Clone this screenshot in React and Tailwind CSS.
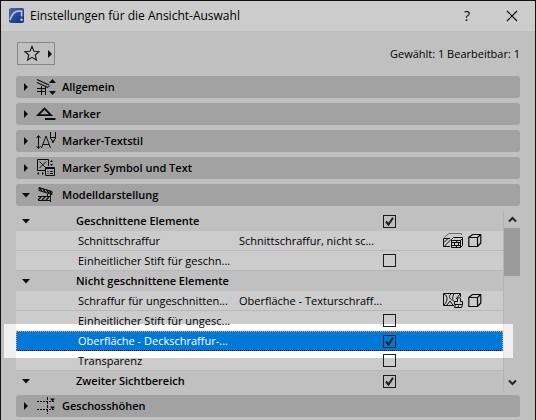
import React, { useState } from 'react';

const StarIcon = () => (
  <svg width="17" height="17" viewBox="0 0 17 17" fill="none" stroke="#222" strokeWidth="1.2">
    <path d="M8.5 1 L10.6 6.2 L16 6.6 L11.9 10.1 L13.2 15.5 L8.5 12.6 L3.8 15.5 L5.1 10.1 L1 6.6 L6.4 6.2 Z" />
  </svg>
);

const Arrow = ({ open }) => (
  <svg width="8" height="8" viewBox="0 0 8 8" fill="#111" className="shrink-0">
    {open ? <path d="M0 2 H8 L4 6.4 Z" /> : <path d="M2 0 L6 4 L2 8 Z" />}
  </svg>
);

const AppLogo = () => (
  <svg width="16" height="16" viewBox="0 0 16 16">
    <defs>
      <linearGradient id="logo" x1="0" y1="0" x2="1" y2="1">
        <stop offset="0" stopColor="#5b86dc" />
        <stop offset="0.5" stopColor="#2c5cc8" />
        <stop offset="1" stopColor="#123a9c" />
      </linearGradient>
    </defs>
    <rect x="0" y="0" width="15" height="15" rx="2" fill="url(#logo)" />
    <path d="M1 12 C3 6 6 3.2 9.5 3.2 H12.6 V8.5" fill="none" stroke="#e8effc" strokeWidth="1.8" />
    <circle cx="12.6" cy="11.8" r="1.3" fill="#fff" />
  </svg>
);

const icons = {
  general: (
    <>
      <path d="M1 1.5 L13 7 M1 4.5 L12 9.5" strokeWidth="1.3" />
      <path d="M1 10.5 H10 M1 13.5 H10 M5.5 8 V17 M9.5 9 V17 M12 9.5 L14 7.5" />
      <path d="M13 5 L16.5 1 L20 5 Z M13 13 H20 L16.5 17 Z" fill="#111" stroke="none" />
    </>
  ),
  marker: (
    <>
      <path d="M2 10.2 L8.5 3.5 L15 10.2 Z" strokeWidth="1.8" />
      <path d="M9 14 H19.5" strokeWidth="2" />
    </>
  ),
  textStyle: (
    <>
      <path d="M2.5 4 V16 M0.5 6 L2.5 3.5 L4.5 6 M0.5 14 L2.5 16.5 L4.5 14" />
      <path d="M5.5 16 L10 4 L14.5 16 M7 12.5 H13" />
      <path d="M14.5 0 V6 L17 10.5 L19.5 6 V0 M14.5 5.5 H19.5 M17 8 V11" />
    </>
  ),
  symbol: (
    <>
      <path d="M9 11.5 H1.5 V0.5 H12.5 V7 M3.5 2.5 L10 9 M10 2.5 L3.5 9" />
      <path d="M9.5 8.5 H18.5 V16.5 H9.5 Z M9.5 9.5 H18.5 M11.5 12.5 H12.5 M14 12.5 H17 M11.5 14.5 H12.5 M14 14.5 H17" />
      <path d="M14 3 L15.5 1 L17 3 Z M14 5 H17 L15.5 7 Z M3 13 V16 L1 14.5 Z M6 13 V16 L8 14.5 Z" fill="#111" stroke="none" />
    </>
  ),
  model: (
    <>
      <path d="M3 1.5 L16 5.5 V8.5 L3 4.5 Z" />
      <path d="M3.5 2 L6 5.2 M7 3 L9.5 6.3 M10.5 4 L13 7.4 M13.5 5 L15.5 8" strokeWidth="1.4" />
      <path d="M2 10.5 H14 M2 14.5 H14 M14.5 8 V16 M11.5 8 V11" />
      <path d="M2 14 L5 11 M6 14 L9 11 M10 14 L13 11" strokeWidth="1.4" />
    </>
  ),
  stories: (
    <>
      <path d="M1 4.5 H19 M1 12.5 H19" strokeDasharray="2 1" />
      <path d="M11.5 0 V17" strokeDasharray="3 1" />
      <path d="M14 1.5 H19 L16.5 4.5 Z M14 9.5 H19 L16.5 12.5 Z" fill="#111" stroke="none" />
    </>
  ),
};

const CutFillIcon = () => (
  <svg width="20" height="17" viewBox="0 0 20 17" fill="none" stroke="#111">
    <path d="M1 5.5 L6 1.5 H18.5 V3" stroke="#888" />
    <path d="M7 6.5 H0.5 V14.5 H7 M1 10.5 L5 6.5 M1 14.5 L8 7.5" />
    <path d="M8.5 15.5 V7.5 L10.5 5.5 H19.5 V13.5 L17.5 15.5 Z M8.5 8.5 H17.5 V15.5 M17.5 8.5 L19.5 6.5" />
    <path d="M9 10.5 H17 M9 13.5 H17 M13.5 8.5 V10.5 M11.5 10.5 V13.5 M15.5 10.5 V13.5 M13.5 13.5 V15.5" />
  </svg>
);

const SurfaceIcon = () => (
  <svg width="20" height="17" viewBox="0 0 20 17" fill="none" stroke="#111">
    <path d="M11 13.5 H0.5 V1.5 H17.5 V5" />
    <path d="M1 2 C5 4 5 9 1 13 M4 13 L7 9 L10 13 M8 2 C5 4 7 7 9 8 M11 2 C9 5 9 9 12 10 M13 7 L17 2" />
    <path d="M14.5 9.5 V6.5 Q16 4.5 17.5 6.5 V9.5 H19.5 V12.5 H11.5 V9.5 Z M12.5 12.5 L11.5 15.5 H18.5 L19.5 12.5 M15 15.5 L15.5 13.5" fill="#fff" />
  </svg>
);

const CubeIcon = () => (
  <svg width="14" height="15" viewBox="0 0 14 15" fill="none" stroke="#111">
    <path d="M0.8 4.5 L4.5 1.5 H12.8 V10 L9.5 13.5 H0.8 Z M0.8 4.5 H9.5 V13.5 M9.5 4.5 L12.8 1.5" strokeLinejoin="round" strokeWidth="1.2" />
  </svg>
);

const Section = ({ icon, title, open, onToggle }) => (
  <button
    type="button"
    aria-expanded={open}
    onClick={onToggle}
    className="flex h-[22px] w-full items-center rounded-[3px] bg-[#cbcbcb] pl-1.5 text-left font-semibold"
  >
    <Arrow open={open} />
    <svg width="21" height="18" viewBox="0 0 21 18" fill="none" stroke="#111" className="mr-[5px] ml-[6px] shrink-0">
      {icons[icon]}
    </svg>
    {title}
  </button>
);

const TickBox = ({ label, checked, onChange }) => (
  <span className="grid size-[13px]">
    <input
      type="checkbox"
      aria-label={label}
      checked={checked}
      onChange={onChange}
      className="col-start-1 row-start-1 size-[13px] appearance-none border border-[#222]"
    />
    {checked && (
      <svg viewBox="0 0 13 13" className="pointer-events-none col-start-1 row-start-1 size-[13px]" fill="none" stroke="#222" strokeWidth="2">
        <path d="M3 6.5 L5.5 9.5 L10 2.8" />
      </svg>
    )}
  </span>
);

const initialRows = [
  { id: 'cut', group: true, label: 'Geschnittene Elemente', checked: true },
  { id: 'cutFill', label: 'Schnittschraffur', value: 'Schnittschraffur, nicht sc...', icon: <CutFillIcon /> },
  { id: 'cutPen', label: 'Einheitlicher Stift für geschn...', checked: false },
  { id: 'uncut', group: true, label: 'Nicht geschnittene Elemente' },
  { id: 'uncutFill', label: 'Schraffur für ungeschnitten...', value: 'Oberfläche - Texturschraff...', icon: <SurfaceIcon /> },
  { id: 'uncutPen', label: 'Einheitlicher Stift für ungesc...', checked: false },
  { id: 'cover', label: 'Oberfläche - Deckschraffur-...', checked: true, selected: true },
  { id: 'transparency', label: 'Transparenz', checked: false },
  { id: 'second', group: true, label: 'Zweiter Sichtbereich', checked: true },
];

const rowStyle = (row) => {
  if (row.group) return 'h-5 font-semibold';
  if (row.selected) return 'relative h-5 bg-[#0078d7] text-white';
  return 'h-5 bg-white';
};

const ModelTable = () => {
  const [rows, setRows] = useState(initialRows);

  const toggle = (id) => {
    setRows(rows.map((row) => (row.id === id ? { ...row, checked: !row.checked } : row)));
  };

  return (
    <div className="mt-[5px] mb-1 flex">
      <table className="min-w-0 flex-1 table-fixed border-separate border-spacing-0">
        <colgroup>
          <col className="w-[60px]" />
          <col className="w-[163px]" />
          <col />
          <col className="w-[120px]" />
        </colgroup>
        <tbody>
          {rows.map((row) => {
            const line = row.group || row.selected ? 'p-0' : 'border-b border-[#e6e6e6] p-0';
            return (
              <tr key={row.id} className={rowStyle(row)}>
                <td className={line}>
                  {row.group && (
                    <span className="flex pl-1.5">
                      <Arrow open />
                    </span>
                  )}
                </td>
                <td className={line}>
                  <div className={row.group ? 'whitespace-nowrap' : 'pl-0.5 whitespace-nowrap'}>{row.label}</div>
                </td>
                <td className={line}>
                  <div className="whitespace-nowrap">{row.value}</div>
                </td>
                <td className={line}>
                  {row.checked !== undefined && (
                    <TickBox label={row.label} checked={row.checked} onChange={() => toggle(row.id)} />
                  )}
                  {row.icon && (
                    <div className="flex items-center justify-end gap-[5px] pr-[21px]">
                      {row.icon}
                      <CubeIcon />
                    </div>
                  )}
                  {row.selected && (
                    <>
                      <span className="pointer-events-none absolute inset-0 border border-dotted border-[#ff9a3c] border-b-black" />
                      {/* everything outside the active row is dimmed */}
                      <span className="pointer-events-none absolute -top-[7px] -right-[10px] -bottom-[7px] -left-3 z-10 shadow-[0_0_2px_9999px_rgba(0,0,0,0.2)]" />
                    </>
                  )}
                </td>
              </tr>
            );
          })}
        </tbody>
      </table>
      <div className="flex w-[17px] flex-col items-center border-l border-[#e2e2e2]">
        <button type="button" aria-label="Nach oben" className="grid h-[17px] w-full place-items-center">
          <svg width="9" height="7" viewBox="0 0 9 7" fill="none" stroke="#333" strokeWidth="2">
            <path d="M1 5.5 L4.5 2 L8 5.5" />
          </svg>
        </button>
        <div className="w-full flex-1">
          <div className="h-12 w-full bg-[#c2c2c2]" />
        </div>
        <button type="button" aria-label="Nach unten" className="grid h-[17px] w-full place-items-center">
          <svg width="9" height="7" viewBox="0 0 9 7" fill="none" stroke="#333" strokeWidth="2">
            <path d="M1 1.5 L4.5 5 L8 1.5" />
          </svg>
        </button>
      </div>
    </div>
  );
};

const App = () => {
  const [open, setOpen] = useState({ model: true });

  const section = (icon, title) => (
    <Section icon={icon} title={title} open={!!open[icon]} onToggle={() => setOpen({ ...open, [icon]: !open[icon] })} />
  );

  return (
    <div className="relative min-h-screen overflow-hidden border-x border-t border-[#111] bg-[#f0f0f0] font-['Open_Sans','Noto_Sans',sans-serif] text-[11px] leading-4 text-black">
      <header className="flex h-[30px] items-center bg-white pr-[17px] pl-2">
        <AppLogo />
        <h1 className="ml-[5px] flex-1 text-[12px]">Einstellungen für die Ansicht-Auswahl</h1>
        <button type="button" className="mr-[33px] w-3 text-[14px]">?</button>
        <button type="button" aria-label="Schließen">
          <svg width="12" height="12" viewBox="0 0 12 12" fill="none" stroke="#111" strokeWidth="1.2">
            <path d="M1 1 L11 11 M11 1 L1 11" />
          </svg>
        </button>
      </header>

      <main className="px-[15px] pt-[11px]">
        <div className="mb-[11px] flex items-center justify-between">
          <button type="button" aria-label="Favoriten" className="ml-px flex h-[23px] w-[38px] items-center gap-1.5 border border-[#aaa] pl-1.5">
            <StarIcon />
            <Arrow />
          </button>
          <p>Gewählt: 1 Bearbeitbar: 1</p>
        </div>

        <div className="flex flex-col gap-[5px]">
          {section('general', 'Allgemein')}
          {section('marker', 'Marker')}
          {section('textStyle', 'Marker-Textstil')}
          {section('symbol', 'Marker Symbol und Text')}
          {section('model', 'Modelldarstellung')}
        </div>
        {open.model && <ModelTable />}
        {section('stories', 'Geschosshöhen')}
      </main>
    </div>
  );
};

export default App;
